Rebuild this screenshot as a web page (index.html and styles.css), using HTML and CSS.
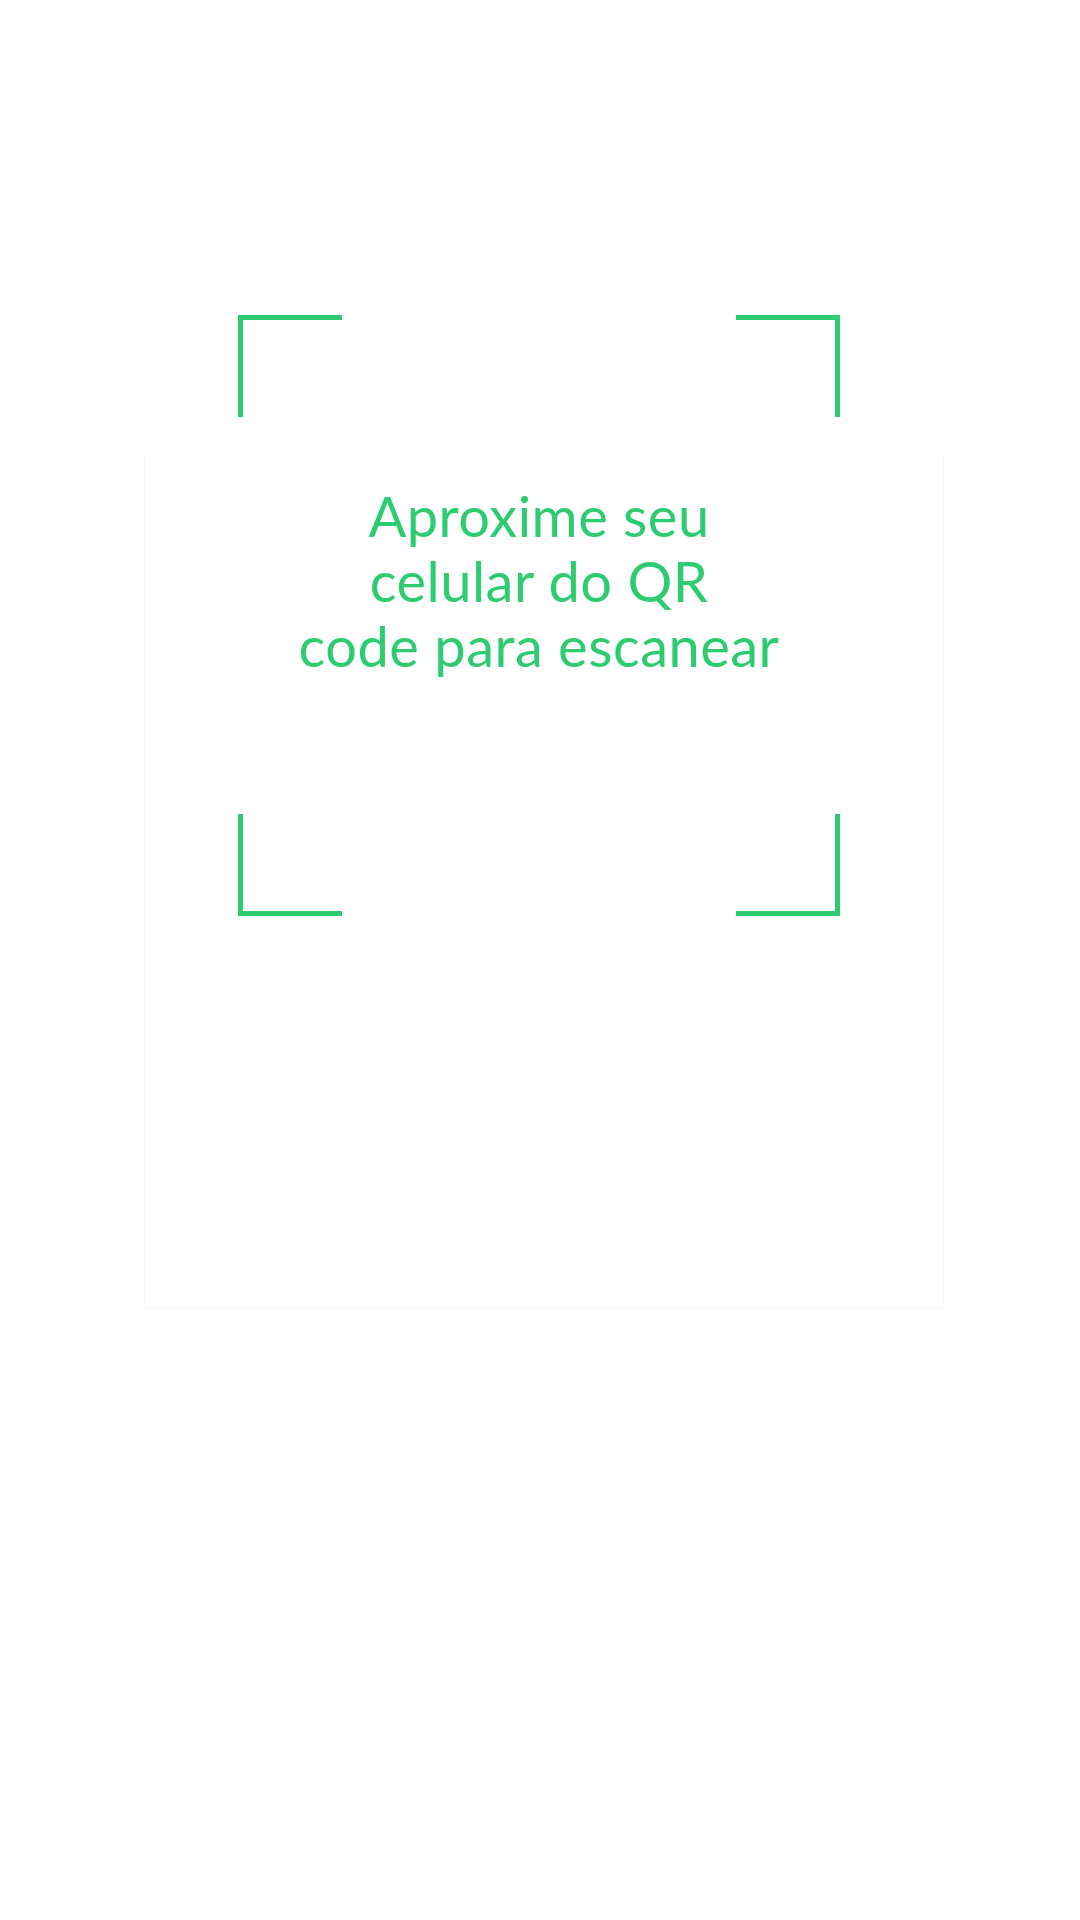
FILE: index.html
```html
<!DOCTYPE html>
<html lang="pt-BR">
<head>
<meta charset="utf-8">
<title>Escanear QR code</title>
<link rel="stylesheet" href="styles.css">
</head>
<body>
<div class="page">
  <div class="card"></div>
  <div class="scanner">
    <span class="corner tl"></span>
    <span class="corner tr"></span>
    <span class="corner bl"></span>
    <span class="corner br"></span>
    <p class="hint">Aproxime seu<br>celular do QR<br>code para escanear</p>
  </div>
</div>
</body>
</html>
```

FILE: styles.css
```css
html, body {
  margin: 0;
  padding: 0;
  background: #ffffff;
}

.page {
  position: relative;
  width: 1080px;
  height: 1920px;
  overflow: hidden;
  display: flex;
  flex-direction: column;
  align-items: flex-start;
}

.card {
  margin-top: 455px;
  margin-left: 144px;
  width: 800px;
  height: 854px;
  box-sizing: border-box;
  border: 1px solid #fdf7f8;
  border-top-color: #ffffff;
  background: #ffffff;
}

.scanner {
  position: absolute;
  left: 238px;
  top: 315px;
  width: 602px;
  height: 601px;
  box-sizing: border-box;
  padding-top: 168px;
}

.corner {
  position: absolute;
  width: 104px;
  height: 102px;
  box-sizing: border-box;
  border: 0 solid #2ecc71;
}

.corner.tl { left: 0; top: 0; border-top-width: 5px; border-left-width: 5px; }
.corner.tr { right: 0; top: 0; border-top-width: 5px; border-right-width: 5px; }
.corner.bl { left: 0; bottom: 0; border-bottom-width: 5px; border-left-width: 5px; }
.corner.br { right: 0; bottom: 0; border-bottom-width: 5px; border-right-width: 5px; }

.hint {
  margin: 0;
  text-align: center;
  font-family: "Lato", "Open Sans", sans-serif;
  font-size: 56px;
  line-height: 65px;
  letter-spacing: 0.5px;
  color: #2ecc71;
  font-weight: 400;
}
```
